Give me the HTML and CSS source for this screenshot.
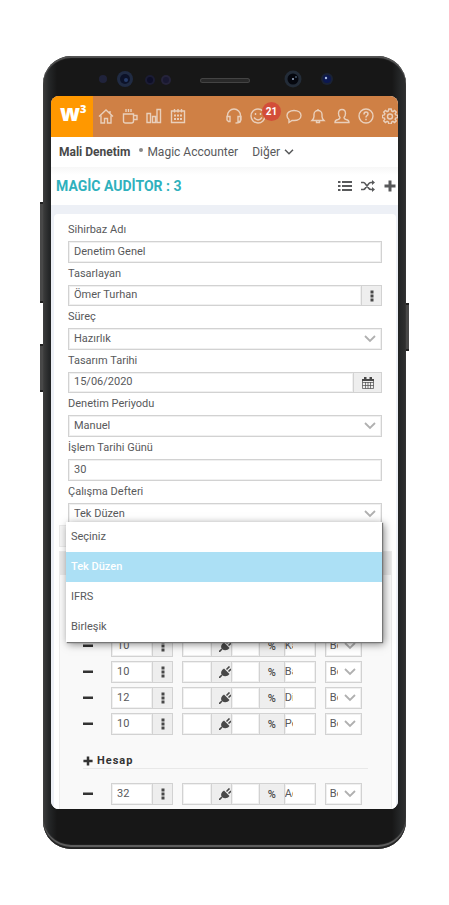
FILE: index.html
```html
<!DOCTYPE html>
<html lang="tr">
<head>
  <meta charset="UTF-8" />
  <meta name="viewport" content="width=device-width, initial-scale=1.0"/>
  <title>Magic Auditor</title>
  <link rel="stylesheet" href="styles.css">
</head>
<body>
  <!-- Shared icons -->
  <svg class="sprite" aria-hidden="true">
    <symbol id="dots" viewBox="0 0 4 12"><path d="M.5 0.500h3v3h-3zM.5 4.500h3v3h-3zM.5 8.500h3v3h-3z" fill="currentColor"/></symbol>
    <symbol id="plug" viewBox="0 0 12 12"><path d="M0 12l3-3M7.500 3.500L10.500.5M9.500 5.500L12 3" stroke="currentColor" stroke-width="1.600" fill="none"/><path d="M5 2.500l5.500 5.500C8.500 10.500 5.500 11 3 9 1 7 2.500 4 5 2.500z" fill="currentColor"/></symbol>
    <symbol id="minus" viewBox="0 0 10 10"><path d="M0 3.500h10v2.500H0z" fill="currentColor"/></symbol>
    <symbol id="plus" viewBox="0 0 12 12"><path d="M4.500 0.500h3v4h4v3h-4v4h-3v-4h-4v-3h4z" fill="currentColor"/></symbol>
  </svg>

  <div class="phone">
    <span class="side volume"></span>
    <span class="side assistant"></span>
    <span class="side power"></span>

    <div class="bezel">
      <svg viewBox="0 0 260 24" width="260" height="24" aria-hidden="true">
        <circle cx="8" cy="11" r="4" fill="#20233b"/>
        <circle cx="30" cy="11" r="8" fill="#202b43"/><circle cx="30" cy="11" r="5" fill="#0c1228"/><circle cx="31" cy="12" r="2" fill="#263b68"/>
        <circle cx="55" cy="12" r="5" fill="#1b1c34"/><circle cx="55" cy="12" r="3" fill="#0d0e27"/>
        <circle cx="71" cy="12" r="5" fill="#25233a"/><circle cx="71" cy="12" r="3" fill="#191831"/>
        <rect x="105" y="10" width="50" height="5" rx="2.500" fill="#444"/><rect x="106" y="11" width="48" height="3" rx="1.500" fill="#292929"/>
        <circle cx="198" cy="11" r="8.500" fill="#232c38"/><circle cx="198" cy="11" r="5.500" fill="#05070e"/><circle cx="198" cy="11" r="1" fill="#9badc9"/><circle cx="201" cy="9" r="1" fill="#456"/>
        <circle cx="232" cy="11" r="6" fill="#1a2235"/><circle cx="232" cy="11" r="4" fill="#0c1851"/><circle cx="231" cy="10" r="1.200" fill="#a9bbdd"/>
      </svg>
    </div>

    <div class="screen">
      <header class="topbar">
        <a class="logo" href="#">w<sup>3</sup></a>
        <nav class="icons">
          <a href="#" aria-label="Ana sayfa"><svg viewBox="0 0 16 16"><path d="M1 8.500L8 2l7 6.500M3 7.500V15h3.500v-4.500h3V15H13V7.500M12 3v2.500"/></svg></a>
          <a href="#" aria-label="Mola"><svg viewBox="0 0 16 16"><path d="M1.500 6h10v7q0 2-2 2h-6q-2 0-2-2zM11.500 7.500h3.500v4h-3.500M4 1v3M6.500 1v3M9 1v3"/></svg></a>
          <a href="#" aria-label="Raporlar"><svg viewBox="0 0 16 16"><path d="M1 5.500h3.500v9H1zM6.500 8.500h3v6h-3zM11 1.500h3.500v13H11z"/></svg></a>
          <a href="#" aria-label="Takvim"><svg viewBox="0 0 16 16"><path d="M1.500 3h13v11.500h-13zM4.500 1v3.500M8 1v3.500M11.500 1v3.500"/><path d="M4 7.500h8M4 11h8" stroke-width="2" stroke-dasharray="2 1"/></svg></a>
        </nav>
        <nav class="icons end">
          <a href="#" aria-label="Destek"><svg viewBox="0 0 16 16"><path d="M1.500 9V7.500a6.500 6.500 0 0 1 13 0V13q0 2-5 2M1 8.500h3v5H2.500L1 12zM15 8.500h-3v5h1.500L15 12z"/></svg></a>
          <a class="notify" href="#" aria-label="Bildirimler"><svg viewBox="0 0 16 16"><circle cx="8" cy="8" r="7"/><path d="M4 9.500q4 5 8 0M5.500 5v2M10.500 5v2"/></svg><span class="badge">21</span></a>
          <a href="#" aria-label="Mesajlar"><svg viewBox="0 0 16 16"><path d="M8 2.500c4 0 7 2 7 5s-3 5-7 5H6L3 14.500v-3C1.500 10.500 1 9 1 7.500c0-3 3-5 7-5z"/></svg></a>
          <a href="#" aria-label="Uyarılar"><svg viewBox="0 0 16 16"><path d="M8 1v1.500M2 12.500q2-2 2-4V6.500a4 4 0 0 1 8 0v2q0 2 2 4zM6.500 13v1.500h3V13"/></svg></a>
          <a href="#" aria-label="Profil"><svg viewBox="0 0 16 16"><path d="M6 9.500Q4.500 8 4.500 5.500q0-4 3.500-4t3.500 4Q11.500 8 10 9.500q0 1.500 2 2 3 .5 3 3H1q0-2.500 3-3 2-.5 2-2z"/></svg></a>
          <a href="#" aria-label="Yardım"><svg viewBox="0 0 16 16"><circle cx="8" cy="8" r="7"/><path d="M6 6.500q0-2.500 2-2.500t2 2q0 1-1 1.700-1 .6-1 1.800M8 10.800v1.500" stroke-width="1.500"/></svg></a>
          <a href="#" aria-label="Ayarlar"><svg viewBox="0 0 16 16"><path d="M6.800 1h2.400l.4 2 1.300.6 1.700-1.200 1.700 1.700-1.200 1.700.6 1.200 2 .4v2.200l-2 .4-.6 1.200 1.200 1.700-1.700 1.700-1.700-1.200-1.300.6-.4 2H6.800l-.4-2-1.300-.6-1.700 1.200-1.700-1.700 1.200-1.700L2.300 10l-2-.4V7.400l2-.4.6-1.200-1.200-1.700 1.700-1.700 1.700 1.200L6.400 3z"/><circle cx="8" cy="8.500" r="2.500"/></svg></a>
        </nav>
      </header>

      <nav class="menu">
        <a class="current" href="#">Mali Denetim</a>
        <a class="dotted" href="#">Magic Accounter</a>
        <a class="more" href="#">Diğer <svg viewBox="0 0 10 6" width="10" height="6"><path d="M1 .8l4 4 4-4" fill="none" stroke="currentColor" stroke-width="1.500"/></svg></a>
      </nav>

      <div class="titlebar">
        <h1>MAGİC AUDİTOR : 3</h1>
        <div class="actions">
          <button type="button" aria-label="Liste"><svg viewBox="0 0 14 12" width="14" height="12"><path d="M0 1h2.500v2H0zM0 5h2.500v2H0zM0 9h2.500v2H0zM4 1h10v2H4zM4 5h10v2H4zM4 9h10v2H4z" fill="currentColor"/></svg></button>
          <button type="button" aria-label="Karıştır"><svg viewBox="0 0 14 12" width="14" height="12"><path d="M0 2.500h2.500q1 0 2 1.500l3 4q1 1.500 2.500 1.500h2M0 9.500h2.500q1 0 2-1.500l3-4Q8.500 2.500 10 2.500h2" fill="none" stroke="currentColor" stroke-width="1.600"/><path d="M11 0l3 2.500L11 5zM11 7l3 2.500L11 12z" fill="currentColor"/></svg></button>
          <button type="button" aria-label="Ekle"><svg width="12" height="12"><use href="#plus"/></svg></button>
        </div>
      </div>

      <main>
        <form class="card">
          <div class="field">
            <label for="name">Sihirbaz Adı</label>
            <input type="text" id="name" value="Denetim Genel">
          </div>
          <div class="field">
            <label for="designer">Tasarlayan</label>
            <div class="group">
              <input type="text" id="designer" value="Ömer Turhan">
              <button type="button" class="addon" aria-label="Seç"><svg width="4" height="12"><use href="#dots"/></svg></button>
            </div>
          </div>
          <div class="field">
            <label for="process">Süreç</label>
            <select id="process"><option>Hazırlık</option></select>
          </div>
          <div class="field">
            <label for="date">Tasarım Tarihi</label>
            <div class="group">
              <input type="text" id="date" value="15/06/2020">
              <button type="button" class="addon wide" aria-label="Takvim"><svg viewBox="0 0 12 12" width="12" height="12"><path d="M.5 2.500h11v9H.5zM.5 5.500h11M.5 8.500h11M3.500 5v6.500M6 5v6.500M8.500 5v6.500" fill="none" stroke="currentColor" stroke-width=".7"/><path d="M0 2h12v2H0zM2 0h2.500v2H2zM7.500 0H10v2H7.500z" fill="currentColor"/></svg></button>
            </div>
          </div>
          <div class="field">
            <label for="period">Denetim Periyodu</label>
            <select id="period"><option>Manuel</option></select>
          </div>
          <div class="field">
            <label for="day">İşlem Tarihi Günü</label>
            <input type="text" id="day" value="30">
          </div>
          <div class="field">
            <label for="book">Çalışma Defteri</label>
            <select id="book"><option>Tek Düzen</option></select>
            <ul class="options">
              <li>Seçiniz</li>
              <li class="selected">Tek Düzen</li>
              <li>IFRS</li>
              <li>Birleşik</li>
            </ul>
          </div>

          <div class="tab"></div>
          <section class="accounts">
            <div class="accounts-head"></div>
            <div class="rows" id="groupRows"></div>
            <h2><svg width="10" height="10"><use href="#plus"/></svg> Hesap</h2>
            <div class="rows" id="accountRows"></div>
          </section>
        </form>
      </main>
    </div>
  </div>

  <script>
    // Build one account row: code, two amounts, name and balance side
    function addRow(target, code, name) {
      const row = document.createElement('div');
      row.className = 'row';
      row.innerHTML = `
        <button type="button" class="remove" aria-label="Sil"><svg width="10" height="10"><use href="#minus"/></svg></button>
        <div class="group code">
          <input type="text" value="${code}" aria-label="Kod">
          <button type="button" class="addon" aria-label="Seç"><svg width="4" height="12"><use href="#dots"/></svg></button>
        </div>
        <div class="group amounts">
          <input type="text" aria-label="Formül">
          <button type="button" class="addon plug" aria-label="Bağla"><svg width="12" height="12"><use href="#plug"/></svg></button>
          <input type="text" aria-label="Oran">
          <span class="addon percent">%</span>
          <input type="text" class="short" value="${name}" aria-label="Ad">
        </div>
        <select aria-label="Bakiye"><option>Bo</option></select>`;
      document.getElementById(target).appendChild(row);
    }

    [['10', 'Ka'], ['10', 'Ba'], ['12', 'Di'], ['10', 'Pe']].forEach(([code, name]) => addRow('groupRows', code, name));
    addRow('accountRows', '32', 'Ac');
  </script>
</body>
</html>
```
FILE: styles.css
```css
:root {
  --text: #58595b;
  --dark: #484848;
  --line: #d2d2d2;
  --teal: #2fb1bd;
  --chevron: url("data:image/svg+xml,%3Csvg xmlns='http://www.w3.org/2000/svg' viewBox='0 0 12 8'%3E%3Cpath d='M1 1l5 5 5-5' fill='none' stroke='%23b0b0b0' stroke-width='1.800'/%3E%3C/svg%3E");
}
* {
  box-sizing: border-box;
}
body {
  margin: 0;
  padding: 56px 43px;
  background: #fff;
  color: var(--text);
  font-family: Roboto, sans-serif;
  font-size: 11px;
}
input, select, button {
  font: inherit;
  color: inherit;
  margin: 0;
  border-radius: 0;
}
button {
  padding: 0;
  border: none;
  background: none;
  cursor: pointer;
}
a {
  color: inherit;
  text-decoration: none;
}
svg {
  display: block;
}
.sprite {
  position: absolute;
  width: 0;
  height: 0;
}

/* Device */
.phone {
  position: relative;
  padding: 0 8px 40px;
  border-radius: 28px;
  background: linear-gradient(90deg, #3d3d3d, #252728 6px, #171717 14px, #171717 calc(100% - 14px), #252728 calc(100% - 6px), #303030);
  box-shadow: inset 0 2px 1px #555, inset 0 -2px 1px #222, inset 0 -4px 1px #666;
}
.bezel {
  display: flex;
  justify-content: center;
  height: 40px;
  padding-top: 12px;
}
.side {
  position: absolute;
  width: 3px;
  background: #484848;
  border: solid #222;
  border-width: 2px 0;
}
.volume {
  left: -3px;
  top: 146px;
  height: 101px;
}
.assistant {
  left: -3px;
  top: 288px;
  height: 48px;
}
.power {
  right: -3px;
  top: 247px;
  height: 48px;
}
.screen {
  border-radius: 8px;
  overflow: hidden;
  background: #fff;
}

/* Header */
.topbar {
  display: flex;
  align-items: center;
  height: 41px;
  background: #cf8045;
}
.logo {
  width: 42px;
  height: 41px;
  padding-left: 9px;
  background: #ff9800;
  color: #fff;
  font: 800 22px/32px "Open Sans", sans-serif;
}
.logo sup {
  font-size: 11px;
  line-height: 0;
  vertical-align: 8px;
}
.icons {
  display: flex;
  gap: 8px;
  padding: 0 0 2px 5px;
}
.icons svg {
  width: 16px;
  height: 16px;
  fill: none;
  stroke: #e9cfbb;
  stroke-width: 1.4;
}
.end {
  margin-left: auto;
}
.notify {
  position: relative;
  margin-right: 12px;
}
.badge {
  position: absolute;
  left: 12px;
  top: -6px;
  width: 19px;
  height: 19px;
  border-radius: 50%;
  background: #d34e39;
  color: #fff;
  font-size: 10px;
  font-weight: 700;
  line-height: 19px;
  text-align: center;
}
.menu {
  display: flex;
  align-items: center;
  gap: 9px;
  height: 30px;
  padding: 0 8px;
  font-size: 12px;
}
.current {
  font-weight: 700;
  color: var(--dark);
}
.dotted::before {
  content: "";
  display: inline-block;
  width: 4px;
  height: 4px;
  margin-right: 4px;
  border-radius: 50%;
  background: #888;
  vertical-align: 4px;
}
.more {
  display: flex;
  align-items: center;
  gap: 4px;
  margin-left: 5px;
}
.titlebar {
  display: flex;
  align-items: center;
  justify-content: space-between;
  height: 38px;
  padding: 0 2px 0 5px;
  background: linear-gradient(#f7f7f7, #fff 8px);
}
h1 {
  margin: 0;
  color: var(--teal);
  font-size: 14px;
  font-weight: 700;
}
.actions {
  display: flex;
  gap: 9px;
}

/* Form */
main {
  padding: 9px 2px 0 3px;
  background: #edf0f6;
}
.card {
  padding: 5px 4px 0 5px;
  border-radius: 4px 4px 0 0;
  background: #fff;
}
.field {
  position: relative;
  margin: 0 10px 0 9px;
}
.field label {
  display: block;
  line-height: 22px;
}
input, select {
  display: block;
  width: 100%;
  min-width: 0;
  height: 22px;
  padding: 0 5px 2px;
  border: 1px solid var(--line);
  background: #fff;
  box-shadow: inset 0 0 0 1px #f0f0f0;
  outline: none;
}
select {
  appearance: none;
  padding-right: 22px;
  background: #fff var(--chevron) no-repeat right 5px center / 12px 8px;
}
.group {
  display: flex;
  height: 21px;
}
.group input {
  flex: 1;
  height: 21px;
}
.addon {
  display: flex;
  flex: none;
  align-items: center;
  justify-content: center;
  width: 20px;
  border: 1px solid var(--line);
  border-left: none;
  background: #eee;
  color: var(--dark);
}
.wide {
  width: 28px;
}
.options {
  position: absolute;
  z-index: 1;
  top: 41px;
  left: -2px;
  right: 0;
  margin: 0;
  padding: 0;
  list-style: none;
  background: #fff;
  box-shadow: 1px 1px 1px #777, 2px 2px 8px rgba(0,0,0,0.5);
}
.options li {
  padding-left: 5px;
  line-height: 30px;
}
.options .selected {
  background: #ace0f5;
  color: #fff;
  font-weight: 500;
}

/* Accounts */
.tab {
  width: 60px;
  height: 22px;
  border: 1px solid #eaeaea;
  background: #f5f5f5;
}
.accounts {
  margin-top: 4px;
  border: 1px solid #ececec;
  border-bottom: none;
  background: #f9f9f9;
  padding-bottom: 4px;
}
.accounts-head {
  height: 23px;
  margin-bottom: 60px;
  background: #e8e8e8;
}
.rows {
  display: grid;
  gap: 4px;
  padding: 0 29px 0 23px;
}
.row {
  display: grid;
  grid-template-columns: 19px 62fr 133fr 37fr;
  column-gap: 9px;
  height: 22px;
}
.remove {
  color: #333;
}
.row .group, .row .group input, .row .addon {
  height: 22px;
}
.amounts .addon + input {
  border-left: none;
}
.amounts .plug {
  justify-content: flex-end;
}
.amounts .percent {
  width: 25px;
  font-weight: 500;
}
.amounts .short {
  flex: none;
  width: 31px;
  padding: 0 22px 2px 0;
}
.row select {
  padding: 0 23px 2px 4px;
}
h2 {
  display: flex;
  align-items: center;
  gap: 4px;
  margin: 19px 23px 14px;
  border-bottom: 1px solid #e8e8e8;
  color: #333;
  font-size: 11px;
  font-weight: 700;
  line-height: 14px;
  letter-spacing: 1px;
}
```
